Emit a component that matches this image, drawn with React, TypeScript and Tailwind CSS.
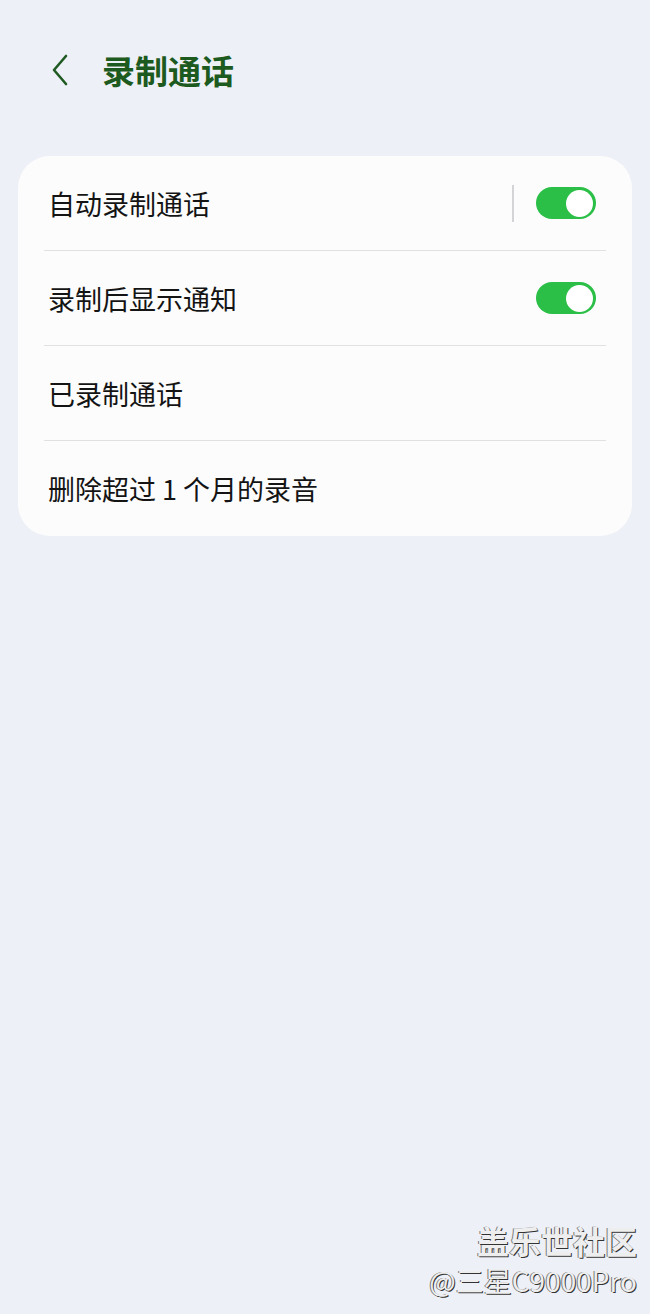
import React from "react";

const font = "font-['Noto_Sans_CJK_SC','Noto_Sans',sans-serif]";

const Toggle = () => (
  <div className="flex h-[32px] w-[60px] items-center justify-end rounded-full bg-[#2bbf47] pr-[3px]">
    <div className="size-[27px] rounded-full bg-white" />
  </div>
);

const rows = [
  { label: "自动录制通话", toggle: true, divider: true },
  { label: "录制后显示通知", toggle: true, divider: false },
  { label: "已录制通话", toggle: false, divider: false },
  { label: "删除超过 1 个月的录音", toggle: false, divider: false },
];

const App = () => {
  return (
    <div className={`relative flex h-[1314px] w-[650px] flex-col bg-[#eef0f7] ${font}`}>
      <div className="flex h-[142px] items-start gap-[28px] pl-[46px] pt-[48px]">
        <svg width="28" height="40" viewBox="0 0 28 40" className="mt-[2px]">
          <path d="M20 6 L8 20 L20 34" fill="none" stroke="#1f5a22" strokeWidth="2.6" strokeLinecap="round" strokeLinejoin="round" />
        </svg>
        <p className="text-[33px] font-bold leading-[44px] text-[#1d5a20]">录制通话</p>
      </div>

      <div className="mx-[18px] mt-[14px] rounded-[32px] bg-[#fcfcfc] px-[26px]">
        {rows.map((row, i) => (
          <div
            key={row.label}
            className={
              "flex h-[95px] items-center justify-between " +
              (i < rows.length - 1 ? "border-b border-[#e1e1e3]" : "")
            }
          >
            <p className="pl-[4px] text-[27px] leading-none text-[#141414]">{row.label}</p>
            {row.toggle && (
              <div className="flex items-center">
                {row.divider && <div className="mr-[22px] h-[37px] w-[2px] bg-[#d4d4d6]" />}
                <div className="mr-[10px]">
                  <Toggle />
                </div>
              </div>
            )}
          </div>
        ))}
      </div>

      <div className="absolute bottom-[18px] right-[13px] flex flex-col items-end gap-[6px]">
        <p className="text-[32px] font-bold leading-[36px] text-[#eeeeee] [text-shadow:1px_1px_0_#333,-1px_0_0_#777]">
          盖乐世社区
        </p>
        <p className="text-[28px] leading-[32px] text-[#eeeeee] [text-shadow:1px_1px_0_#333,-1px_0_0_#777]">
          @三星C9000Pro
        </p>
      </div>
    </div>
  );
};

export default App;
